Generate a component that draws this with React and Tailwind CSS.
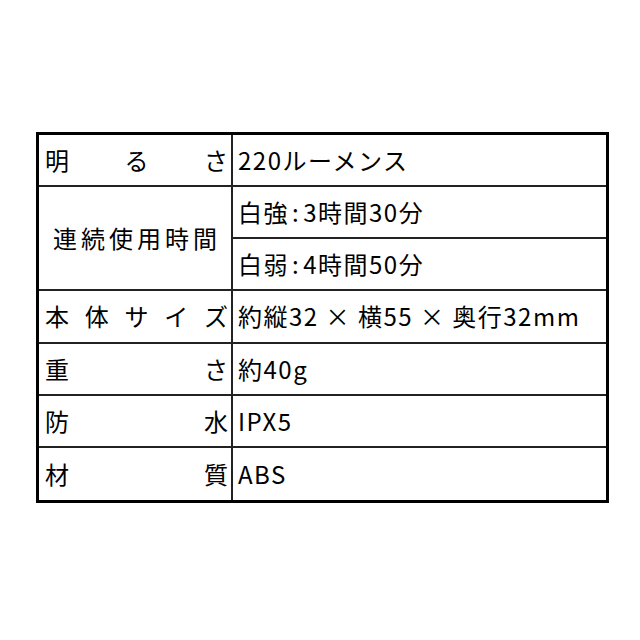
const font = { fontFamily: '"Noto Sans CJK JP", "Noto Sans", sans-serif' };

// label spread across the cell, one span per character
const Spread = ({ chars }) => (
  <div className="flex h-full items-center justify-between border-r-2 border-b-2 border-[#222] pl-[6px] pr-[3px]">
    {chars.map((c, i) => (
      <span key={i}>{c}</span>
    ))}
  </div>
);

const Value = ({ children, last }) => (
  <div
    className={`flex h-full items-center pl-[5px] tracking-[1.5px] ${
      last ? "" : "border-b-2 border-[#222]"
    }`}
  >
    {children}
  </div>
);

export default function App() {
  return (
    <div className="min-h-screen bg-white pt-[132px] pl-[36px]" style={font}>
      <div className="grid h-[371px] w-[573px] grid-cols-[194px_1fr] grid-rows-[repeat(7,1fr)] border-[3px] border-black text-[24px] leading-none text-black">
        {/* 明るさ */}
        <Spread chars={["明", "る", "さ"]} />
        <Value>220ルーメンス</Value>

        {/* 連続使用時間 (two rows) */}
        <div className="row-span-2 flex items-center justify-center border-r-2 border-b-2 border-[#222] pl-[4px] tracking-[4px]">
          連続使用時間
        </div>
        <Value>
          白強<span className="mx-[3px]">:</span>3時間30分
        </Value>
        <Value>
          白弱<span className="mx-[3px]">:</span>4時間50分
        </Value>

        {/* 本体サイズ */}
        <Spread chars={["本", "体", "サ", "イ", "ズ"]} />
        <Value>約縦32 × 横55 × 奥行32mm</Value>

        {/* 重さ */}
        <Spread chars={["重", "さ"]} />
        <Value>約40g</Value>

        {/* 防水 */}
        <Spread chars={["防", "水"]} />
        <Value>IPX5</Value>

        {/* 材質 */}
        <div className="flex h-full items-center justify-between border-r-2 border-[#222] pl-[6px] pr-[3px]">
          <span>材</span>
          <span>質</span>
        </div>
        <Value last>ABS</Value>
      </div>
    </div>
  );
}
